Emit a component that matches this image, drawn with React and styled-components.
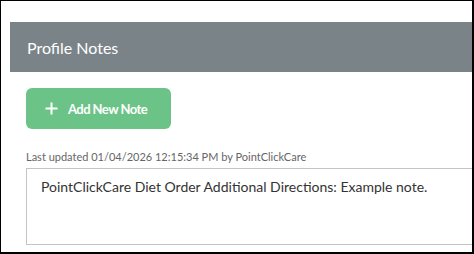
import React, { useState } from "react";
import styled, { createGlobalStyle } from "styled-components";

const GlobalStyle = createGlobalStyle`
    html, body {
        margin: 0;
        padding: 0;
        background: #ffffff;
    }
    * {
        box-sizing: border-box;
    }
`;

const Frame = styled.div`
    width: 474px;
    height: 254px;
    overflow: hidden;
    border-style: solid;
    border-color: #000000;
    border-width: 1px 2px 2px 1px;
    padding: 21px 0 0 9px;
    font-family: Lato, "Open Sans", sans-serif;
    background: #ffffff;
`;

const Panel = styled.section`
    width: 520px;
`;

const Header = styled.header`
    height: 50px;
    display: flex;
    align-items: center;
    padding-left: 17px;
    background-color: #7a8488;
    color: #ffffff;
    font-size: 16px;
`;

const Body = styled.div`
    padding: 16px 0 0 16px;
    display: flex;
    flex-direction: column;
    align-items: flex-start;
`;

const AddButton = styled.button`
    width: 145px;
    height: 41px;
    display: flex;
    align-items: center;
    gap: 10px;
    padding: 0 0 0 19px;
    border: none;
    border-radius: 6px;
    background-color: #6cc387;
    color: #ffffff;
    font-family: inherit;
    font-weight: 700;
    font-size: 13px;
    letter-spacing: -0.55px;
    cursor: pointer;
`;

const Updated = styled.div`
    margin-top: 21px;
    font-size: 11px;
    line-height: 13px;
    color: #666666;
`;

const NoteBox = styled.textarea`
    margin-top: 5px;
    width: 480px;
    height: 77px;
    padding: 9px 14px;
    border: 1px solid #c4c4c4;
    font-family: inherit;
    font-size: 14px;
    color: #333333;
    resize: none;
    outline: none;
`;

const PlusIcon = () => (
    <svg width="13" height="13" viewBox="0 0 13 13">
        <path d="M6.5 0.5v12M0.5 6.5h12" stroke="#ffffff" strokeWidth="2" />
    </svg>
);

const App = () => {
    const [note, setNote] = useState(
        "PointClickCare Diet Order Additional Directions: Example note."
    );

    return (
        <>
            <GlobalStyle />
            <Frame>
                <Panel>
                    <Header>Profile Notes</Header>
                    <Body>
                        <AddButton type='button'>
                            <PlusIcon />
                            Add New Note
                        </AddButton>
                        <Updated>
                            Last updated 01/04/2026 12:15:34 PM by PointClickCare
                        </Updated>
                        <NoteBox
                            value={note}
                            onChange={(e) => setNote(e.target.value)}
                        />
                    </Body>
                </Panel>
            </Frame>
        </>
    );
};

export default App;
